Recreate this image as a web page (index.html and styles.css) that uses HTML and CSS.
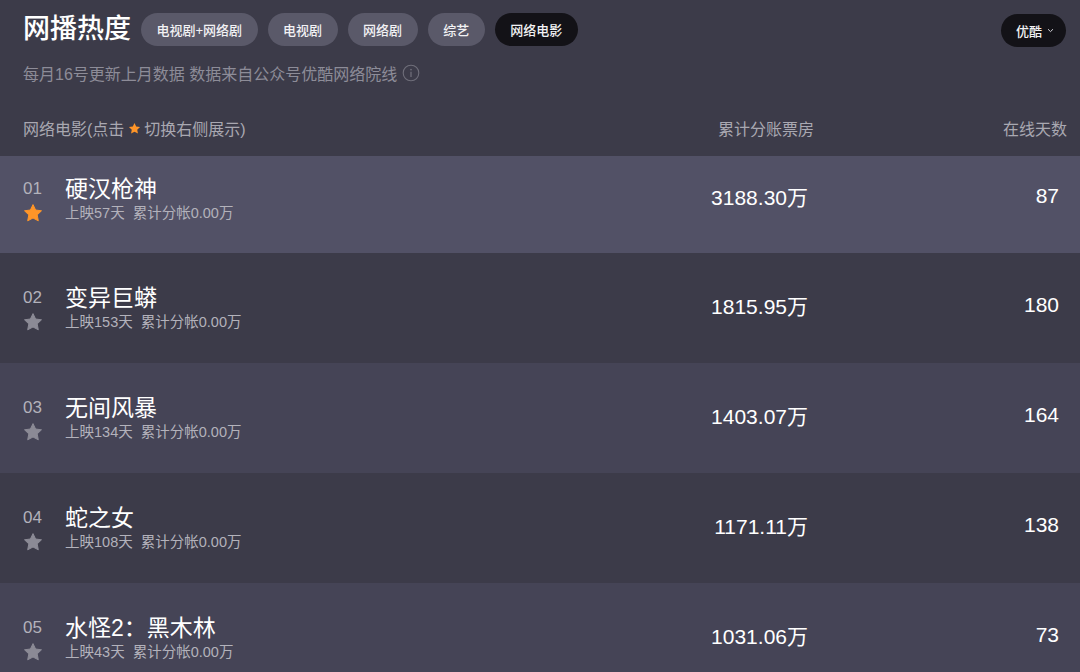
FILE: index.html
```html
<!DOCTYPE html>
<html lang="zh">
<head>
<meta charset="utf-8">
<title>网播热度</title>
<link rel="stylesheet" href="styles.css">
</head>
<body>
<div class="page">
  <div class="top">
    <h1 class="title">网播热度</h1>
    <div class="tabs">
      <span class="pill">电视剧+网络剧</span>
      <span class="pill">电视剧</span>
      <span class="pill">网络剧</span>
      <span class="pill">综艺</span>
      <span class="pill pill-active">网络电影</span>
    </div>
    <span class="pill pill-active platform">优酷<svg class="chev" width="7" height="5" viewBox="0 0 7 5"><path d="M1 1.2l2.5 2.4L6 1.2" fill="none" stroke="#cfcfd4" stroke-width="1"/></svg></span>
  </div>
  <div class="note">每月16号更新上月数据 数据来自公众号优酷网络院线<svg class="info-icon" width="18" height="18" viewBox="0 0 18 18"><circle cx="9" cy="9" r="7.8" fill="none" stroke="#6f6e7a" stroke-width="1.1"/><circle cx="9" cy="5.6" r="0.9" fill="#6f6e7a"/><path d="M9 7.8v5.2" stroke="#6f6e7a" stroke-width="1.3"/></svg></div>

  <div class="thead">
    <div class="th-name">网络电影(点击<svg class="mini-star" width="13" height="13" viewBox="0 0 20 20"><path d="M10 1.6l2.6 5.4 5.9.8-4.3 4.1 1.1 5.9L10 15 4.7 17.8l1.1-5.9L1.5 7.8l5.9-.8z" fill="#ff9528"/></svg>切换右侧展示)</div>
    <div class="th-value">累计分账票房</div>
    <div class="th-days">在线天数</div>
  </div>

  <div class="row row-first">
    <div class="rank"><span class="num">01</span><svg class="star" width="20" height="20" viewBox="0 0 20 20"><path d="M10 1.6l2.6 5.4 5.9.8-4.3 4.1 1.1 5.9L10 15 4.7 17.8l1.1-5.9L1.5 7.8l5.9-.8z" fill="#ff9528" stroke="#ff9528" stroke-width="1" stroke-linejoin="round"/></svg></div>
    <div class="movie"><div class="name">硬汉枪神</div><div class="sub">上映57天&nbsp;&nbsp;累计分帐0.00万</div></div>
    <div class="value">3188.30万</div>
    <div class="days">87</div>
  </div>
  <div class="row">
    <div class="rank"><span class="num">02</span><svg class="star" width="20" height="20" viewBox="0 0 20 20"><path d="M10 1.6l2.6 5.4 5.9.8-4.3 4.1 1.1 5.9L10 15 4.7 17.8l1.1-5.9L1.5 7.8l5.9-.8z" fill="#8b8a95" stroke="#8b8a95" stroke-width="1" stroke-linejoin="round"/></svg></div>
    <div class="movie"><div class="name">变异巨蟒</div><div class="sub">上映153天&nbsp;&nbsp;累计分帐0.00万</div></div>
    <div class="value">1815.95万</div>
    <div class="days">180</div>
  </div>
  <div class="row row-alt">
    <div class="rank"><span class="num">03</span><svg class="star" width="20" height="20" viewBox="0 0 20 20"><path d="M10 1.6l2.6 5.4 5.9.8-4.3 4.1 1.1 5.9L10 15 4.7 17.8l1.1-5.9L1.5 7.8l5.9-.8z" fill="#8b8a95" stroke="#8b8a95" stroke-width="1" stroke-linejoin="round"/></svg></div>
    <div class="movie"><div class="name">无间风暴</div><div class="sub">上映134天&nbsp;&nbsp;累计分帐0.00万</div></div>
    <div class="value">1403.07万</div>
    <div class="days">164</div>
  </div>
  <div class="row">
    <div class="rank"><span class="num">04</span><svg class="star" width="20" height="20" viewBox="0 0 20 20"><path d="M10 1.6l2.6 5.4 5.9.8-4.3 4.1 1.1 5.9L10 15 4.7 17.8l1.1-5.9L1.5 7.8l5.9-.8z" fill="#8b8a95" stroke="#8b8a95" stroke-width="1" stroke-linejoin="round"/></svg></div>
    <div class="movie"><div class="name">蛇之女</div><div class="sub">上映108天&nbsp;&nbsp;累计分帐0.00万</div></div>
    <div class="value">1171.11万</div>
    <div class="days">138</div>
  </div>
  <div class="row row-alt">
    <div class="rank"><span class="num">05</span><svg class="star" width="20" height="20" viewBox="0 0 20 20"><path d="M10 1.6l2.6 5.4 5.9.8-4.3 4.1 1.1 5.9L10 15 4.7 17.8l1.1-5.9L1.5 7.8l5.9-.8z" fill="#8b8a95" stroke="#8b8a95" stroke-width="1" stroke-linejoin="round"/></svg></div>
    <div class="movie"><div class="name">水怪2：黑木林</div><div class="sub">上映43天&nbsp;&nbsp;累计分帐0.00万</div></div>
    <div class="value">1031.06万</div>
    <div class="days">73</div>
  </div>
</div>
</body>
</html>
```

FILE: styles.css
```css
* { box-sizing: border-box; }
html, body {
  margin: 0;
  padding: 0;
  background: #3c3b49;
}
body {
  width: 1080px;
  height: 672px;
  overflow: hidden;
  font-family: "Liberation Sans", "Noto Sans CJK SC", sans-serif;
  color: #ffffff;
}
.page {
  display: flex;
  flex-direction: column;
}
.top {
  display: flex;
  align-items: center;
  padding: 12px 14px 0 23px;
  height: 46px;
}
.title {
  margin: 0 10px 0 0;
  font-size: 27px;
  font-weight: 500;
  line-height: 32px;
  color: #ffffff;
}
.tabs {
  display: flex;
  gap: 10px;
}
.pill {
  display: inline-flex;
  align-items: center;
  height: 33px;
  padding: 0 15.5px;
  border-radius: 17px;
  background: #5a5969;
  color: #f2f2f4;
  font-size: 13px;
  font-weight: 500;
}
.pill-active {
  background: #131217;
}
.platform {
  margin-left: auto;
  margin-top: 3px;
  padding: 0 12px 0 15px;
  gap: 5px;
}
.chev { display: block; }
.note {
  display: flex;
  align-items: center;
  margin-top: 17px;
  padding-left: 23px;
  height: 20px;
  font-size: 16px;
  color: #8d8c98;
}
.info-icon {
  margin-left: 5px;
}
.thead {
  display: flex;
  align-items: center;
  height: 56px;
  margin-top: 17px;
  padding: 0 13px 0 23px;
  font-size: 16px;
  color: #a9a8b1;
}
.th-name {
  flex: 1;
  display: flex;
  align-items: center;
}
.mini-star { margin: 0 3px 0 4px; }
.th-value {
  width: 200px;
  text-align: right;
}
.th-days {
  width: 253px;
  text-align: right;
}
.row {
  display: flex;
  align-items: center;
  height: 110px;
  padding: 0 21px 0 23px;
  background: #3c3b49;
}
.row-first {
  height: 97px;
  padding-bottom: 11px;
  background: #525166;
}
.row-alt {
  background: #454456;
}
.rank {
  width: 42px;
  flex: none;
  display: flex;
  flex-direction: column;
  align-items: flex-start;
}
.num {
  font-size: 17px;
  line-height: 26px;
  color: #b3b2bb;
}
.star {
  display: block;
  margin-top: 1px;
}
.movie {
  flex: 1;
}
.movie .name {
  font-size: 23px;
  line-height: 26px;
  color: #ffffff;
}
.movie .sub {
  margin-top: 1px;
  font-size: 14.5px;
  line-height: 20px;
  color: #b3b2bb;
}
.value {
  width: 200px;
  margin-bottom: 6px;
  text-align: right;
  font-size: 21px;
  color: #ffffff;
}
.days {
  width: 251px;
  margin-bottom: 6px;
  text-align: right;
  font-size: 21px;
  color: #ffffff;
}
```
